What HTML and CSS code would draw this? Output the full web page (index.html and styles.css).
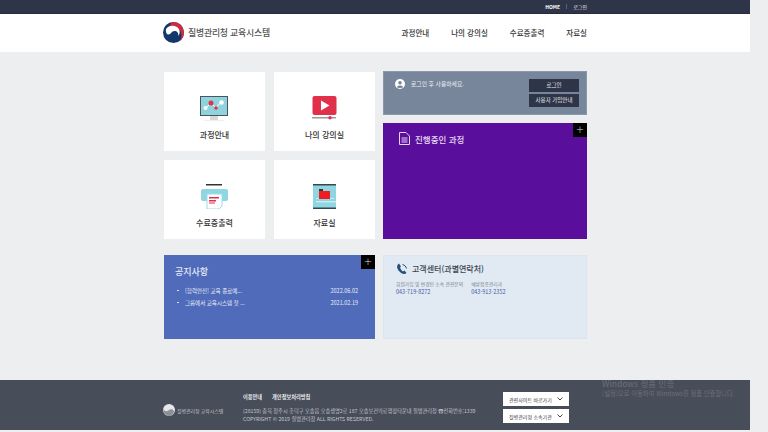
FILE: index.html
```html
<!DOCTYPE html>
<html lang="ko">
<head>
<meta charset="utf-8">
<title>질병관리청 교육시스템</title>
<link rel="stylesheet" href="styles.css">
</head>
<body>
<div class="page">
  <div class="topbar"><div class="wrap topbar-in"><span class="home">HOME</span><i class="sep"></i><span>로그인</span></div></div>
  <header class="header">
    <div class="wrap header-in">
      <div class="logo">
        <svg width="21" height="21" viewBox="0 0 21 21"><circle cx="10.5" cy="10.5" r="10.5" fill="#12386b"/><path d="M10.500 0A10.500 10.500 0 0 1 21 10.500C21 14 19.500 17 17 19 19 15.500 19 10 16 7 13 4.500 8 4 5 7 7.500 3 7 1 10.500 0Z" fill="#d02a3e"/><path d="M3 7C5.500 3.500 10 3 13.500 4.800 17.500 7 17.500 12 15 14 16 11 14 9 11.500 9 8.500 9 8 12.500 5.500 12.500 3.500 12.500 2.500 10 3 7Z" fill="#fff"/></svg>
        <span>질병관리청 교육시스템</span>
      </div>
      <nav class="nav"><a>과정안내</a><a>나의 강의실</a><a>수료증출력</a><a>자료실</a></nav>
    </div>
  </header>
  <main class="wrap main">
    <section class="top">
      <div class="cards">
        <div class="card"><svg width="29" height="25" viewBox="0 0 29 25"><rect x=".5" y=".5" width="27" height="19" fill="#8fd3dc" stroke="#4a5560"/><rect x="10" y="20" width="8" height="4" fill="#d8d8d8"/><rect x="4" y="24" width="20" height="1" fill="#eee"/><path d="M6 12 11 7 16 12 21 6" fill="none" stroke="#fff"/><circle cx="5.500" cy="12" r="2" fill="#fff"/><circle cx="11" cy="7" r="2.500" fill="#e0334c"/><circle cx="16" cy="12" r="1.800" fill="#e0334c"/><circle cx="21.500" cy="6.500" r="2.300" fill="#fff"/></svg><span>과정안내</span></div>
        <div class="card"><svg width="25" height="25" viewBox="0 0 25 25"><rect x=".5" width="24" height="19" rx="2" fill="#e0304a"/><path d="M9 4.500 17.500 9.500 9 14.500Z" fill="#fff"/><rect y="21" width="24" height="1.500" fill="#999"/><circle cx="18" cy="21.700" r="1.700" fill="#e0304a"/></svg><span>나의 강의실</span></div>
        <div class="card"><svg width="27" height="26" viewBox="0 -1 27 26"><rect x="5" y="0" width="16" height="1.500" fill="#333"/><path d="M2 5H25Q27 5 27 7V15Q27 17 25 17H2Q0 17 0 15V7Q0 5 2 5Z" fill="#8fd6e2"/><path d="M6 10H21V22L18 25H6Z" fill="#fff" stroke="#9adde6"/><rect x="8" y="13" width="10" height="1.500" fill="#e0304a"/><rect x="8" y="16" width="7" height="1.500" fill="#e0304a"/><rect x="8" y="18.500" width="6" height="1" fill="#e0304a"/></svg><span>수료증출력</span></div>
        <div class="card"><svg width="23" height="25" viewBox="0 0 23 25"><rect y="1" width="23" height="23" fill="#8fd6e2"/><rect width="23" height="1.500" fill="#34474f"/><rect y="23.500" width="23" height="1.500" fill="#34474f"/><rect x="3" y="14" width="18" height="1" fill="#c5ecf0"/><rect x="3" y="17" width="20" height="1.500" fill="#c5ecf0"/><rect x="6" y="5" width="4" height="2" fill="#333"/><rect x="6" y="7" width="11" height="8" fill="#f01c24"/></svg><span>자료실</span></div>
      </div>
      <div class="side">
        <div class="login">
          <div class="login-msg"><svg width="10" height="10" viewBox="0 0 10 10"><circle cx="5" cy="5" r="5" fill="#fff"/><circle cx="5" cy="3.800" r="1.800" fill="#78869c"/><path d="M1.800 8.200C2.500 6 7.500 6 8.200 8.200 7 9.300 3 9.300 1.800 8.200Z" fill="#78869c"/></svg><span>로그인 후 사용하세요.</span></div>
          <div class="login-btns"><a>로그인</a><a>사용자 가입안내</a></div>
        </div>
        <div class="course">
          <div class="course-title"><svg width="11" height="13" viewBox="0 0 11 13" fill="none" stroke="#e4d4f0"><path d="M.5.500H7L10.500 4V12.500H.500Z"/><path d="M2.500 6H8.500M2.500 8H8.500M2.500 10H8.500"/></svg><span>진행중인 과정</span></div>
          <a class="plus">+</a>
        </div>
      </div>
    </section>
    <section class="bottom">
      <div class="notice">
        <h2>공지사항</h2>
        <ul>
          <li><span>[협력안전] 교육 종료예...</span><time>2022.06.02</time></li>
          <li><span>그룹에서 교육시스템 첫 ...</span><time>2021.02.19</time></li>
        </ul>
        <a class="plus">+</a>
      </div>
      <div class="help">
        <div class="help-title"><svg width="12" height="12" viewBox="0 0 12 12" fill="none"><path d="M3 .500C.500 2 .500 5 3 8 5.500 11 8.500 12 10.500 10L8.500 7.500 7 8.500C5.500 7.500 4.500 6 4 4.500L5 3.500Z" fill="#24507c"/><path d="M6.500 1.500C8.500 2 10 3.500 10.500 5.500" stroke="#24507c"/></svg><span>고객센터(과별연락처)</span></div>
        <div class="contacts">
          <div><small>회원가입 및 변경된 소속 관련문의</small><b>043-719-8272</b></div>
          <div><small>예방접종관리과</small><b>043-913-2352</b></div>
        </div>
      </div>
    </section>
  </main>
  <footer class="footer">
    <div class="wrap footer-in">
      <div class="f-logo"><svg width="12" height="12" viewBox="0 0 12 12"><circle cx="6" cy="6" r="6" fill="#e6e7e9"/><path d="M.5 5C2 8 4.500 7.500 6 6 8 4.500 10 5 11 7 11 10 8 12 6 12 2 12 0 8 .500 5Z" fill="#8c9097"/></svg><span>질병관리청 교육시스템</span></div>
      <div class="f-info">
        <div class="f-links"><b>이용안내</b><b>개인정보처리방침</b></div>
        <p>(28159) 충북 청주시 흥덕구 오송읍 오송생명2로 187 오송보건의료행정타운내 질병관리청 ☎전화번호:1339<br>COPYRIGHT © 2019 질병관리청 ALL RIGHTS RESERVED.</p>
      </div>
      <div class="f-sel">
        <div class="sel"><span>관련사이트 바로가기</span><svg width="6" height="4" viewBox="0 0 6 4" fill="none" stroke="#444"><path d="M.5.500 3 3 5.500.500"/></svg></div>
        <div class="sel"><span>질병관리청 소속기관</span><svg width="6" height="4" viewBox="0 0 6 4" fill="none" stroke="#444"><path d="M.5.500 3 3 5.500.500"/></svg></div>
      </div>
    </div>
  </footer>
</div>
<div class="activate"><strong>Windows 정품 인증</strong><span>[설정]으로 이동하여 Windows를 정품 인증합니다.</span></div>
</body>
</html>
```
FILE: styles.css
```css
* { box-sizing: border-box; }
html, body { margin: 0; height: 432px; overflow: hidden; background: #edeef0; }
body { font-family: "Noto Sans CJK KR", "Noto Sans", sans-serif; color: #333; position: relative; }
ul, h2, p { margin: 0; padding: 0; list-style: none; }
svg { display: block; flex: none; }
.page { width: 750px; }
.wrap { width: 423px; margin-left: 164px; }

.topbar { height: 14px; background: #2f3549; border-bottom: 1px solid #262b3c; }
.topbar-in { height: 13px; display: flex; justify-content: flex-end; align-items: center; gap: 5px; font-size: 5px; color: #e4e6ea; }
.home { font-weight: 700; color: #fff; }
.sep { width: 1px; height: 5px; background: #5c6273; margin: 0 1px; }

.header { height: 38px; background: #fff; }
.header-in { height: 37px; display: flex; justify-content: space-between; align-items: center; }
.logo { display: flex; align-items: center; gap: 4px; margin-left: -1px; font-size: 8.900px; color: #555; font-weight: 500; letter-spacing: -.2px; }
.nav { display: flex; gap: 22px; font-size: 7.500px; font-weight: 500; color: #333; }

.main { padding-top: 19px; }
.top { display: flex; gap: 8px; }
.cards { display: grid; grid-template-columns: 101px 101px; grid-auto-rows: 79px; gap: 9px; width: 211px; margin-top: 1px; }
.card { background: #fff; display: flex; flex-direction: column; align-items: center; justify-content: flex-end; gap: 8px; padding-bottom: 10px; font-size: 8px; font-weight: 500; color: #333; }
.card span { line-height: 12px; }
.side { width: 204px; display: flex; flex-direction: column; gap: 8px; }
.login { height: 44px; background: #78869c; border: 1px solid #8b98ab; display: flex; justify-content: space-between; padding: 7px 7px 0 11px; }
.login-msg { display: flex; gap: 6px; align-items: flex-start; font-size: 5.800px; color: #eef0f4; line-height: 9px; }
.login-btns { width: 50px; display: flex; flex-direction: column; gap: 2px; }
.login-btns a { height: 13px; background: #2f3549; color: #e8eaee; font-size: 5.500px; line-height: 13px; text-align: center; white-space: nowrap; }
.course { height: 116px; background: #590f9b; position: relative; padding: 9px 16px; }
.course-title { display: flex; align-items: center; gap: 5px; color: #e8dcf2; font-size: 8.500px; font-weight: 500; }
.plus { position: absolute; top: 0; right: 0; width: 14px; height: 14px; background: #000; color: #ddd; text-align: center; font-size: 10px; line-height: 13px; font-family: "DejaVu Sans", sans-serif; font-weight: 300; }

.bottom { display: flex; gap: 8px; margin-top: 16px; }
.notice { width: 211px; height: 84px; background: #4f6bba; position: relative; padding: 10px 11px; color: #e8ecf6; }
.notice h2 { font-size: 9px; font-weight: 500; line-height: 13px; margin-bottom: 7px; }
.notice li { display: flex; justify-content: space-between; font-size: 5.500px; line-height: 12px; padding: 0 6px 0 2px; position: relative; margin-bottom: 0; }
.notice li span { padding-left: 8px; position: relative; }
.notice li span::before { content: ""; position: absolute; left: 0; top: 5px; width: 2px; height: 1px; background: #dfe5f4; }
.help { width: 204px; height: 84px; background: #e1e9f2; border: 1px solid #dbe4ef; padding: 6px 12px; }
.help-title { display: flex; align-items: center; gap: 4px; font-size: 8px; font-weight: 500; color: #3a4450; line-height: 14px; margin-bottom: 4px; }
.contacts { display: flex; gap: 8px; }
.contacts div { display: flex; flex-direction: column; }
.contacts small { font-size: 4.800px; color: #7b848f; line-height: 8px; }
.contacts b { font-size: 5.500px; font-weight: 400; color: #3f5aa8; line-height: 8px; }

.footer { margin-top: 41px; height: 50px; background: #474d59; }
.footer-in { height: 50px; display: flex; align-items: flex-start; }
.f-logo { width: 80px; display: flex; align-items: center; gap: 2px; margin: 24px 0 0 -1px; font-size: 4.900px; color: #c6c9ce; }
.f-info { width: 260px; padding-top: 13px; color: #c4c7cc; font-size: 5.200px; line-height: 8px; }
.f-links { display: flex; gap: 10px; color: #eceef0; margin-bottom: 6px; line-height: 8px; }
.f-links b { font-weight: 700; font-size: 5.200px; }
.f-info p { white-space: nowrap; }
.f-sel { width: 66px; display: flex; flex-direction: column; gap: 3px; margin-top: 12px; }
.sel { height: 14px; background: #fff; display: flex; justify-content: space-between; align-items: center; padding: 0 6px; font-size: 5px; color: #333; }

.activate { position: absolute; left: 602px; top: 378px; display: flex; flex-direction: column; color: #6c7079; }
.activate strong { font-size: 8.500px; font-weight: 400; line-height: 11px; }
.activate span { font-size: 6.300px; line-height: 9px; white-space: nowrap; }
```
